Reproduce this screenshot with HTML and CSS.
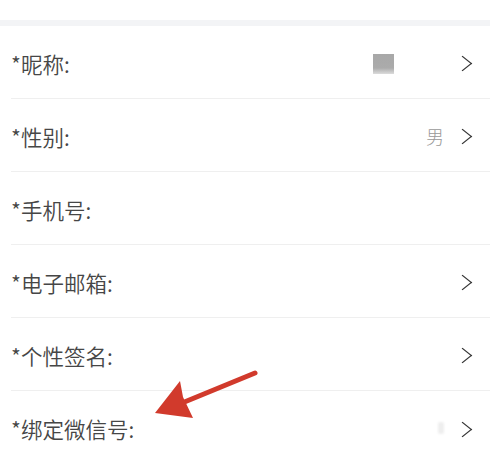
FILE: index.html
```html
<!DOCTYPE html>
<html lang="zh">
<head>
    <meta charset="UTF-8">
    <title>个人资料</title>
    <link rel="stylesheet" href="styles.css">
</head>
<body>
<div class="page">
    <div class="top-space"></div>
    <div class="gap-band"></div>
    <ul class="form-list">
        <li class="row">
            <span class="label">*昵称:</span>
            <span class="value"><span class="avatar-blur"></span></span>
            <span class="chevron"></span>
        </li>
        <li class="row">
            <span class="label">*性别:</span>
            <span class="value text">男</span>
            <span class="chevron"></span>
        </li>
        <li class="row">
            <span class="label">*手机号:</span>
        </li>
        <li class="row">
            <span class="label">*电子邮箱:</span>
            <span class="chevron"></span>
        </li>
        <li class="row">
            <span class="label">*个性签名:</span>
            <span class="chevron"></span>
        </li>
        <li class="row last">
            <span class="label">*绑定微信号:</span>
            <span class="value"><span class="faint"></span></span>
            <span class="chevron"></span>
        </li>
    </ul>
    <!-- annotation arrow over the list -->
    <svg class="arrow" width="130" height="60" viewBox="0 0 130 60">
        <line x1="103" y1="7" x2="30" y2="37" stroke="#d13a2c" stroke-width="5" stroke-linecap="round"/>
        <polygon points="3,47 28,15 31,31 41,52" fill="#d13a2c"/>
    </svg>
</div>
</body>
</html>
```

FILE: styles.css
```css
* { box-sizing: border-box; }
body {
    margin: 0;
    font-family: "Noto Sans CJK SC", "Noto Sans", sans-serif;
    background: #fff;
    color: #444;
}
.page {
    position: relative;
    width: 490px;
    height: 459px;
    overflow: hidden;
}
.top-space {
    height: 20px;
    background: #fff;
}
.gap-band {
    height: 6px;
    background: #f3f4f6;
}
.form-list {
    list-style: none;
    margin: 0;
    padding: 0 0 0 11px;
}
.row {
    display: flex;
    align-items: center;
    height: 73px;
    padding-right: 22px;
    border-bottom: 1px solid #efefef;
}
.row.last {
    border-bottom: none;
}
.label {
    flex: 1;
    font-size: 21.5px;
    font-weight: 350;
    line-height: 1;
    color: #464646;
    padding-top: 3px;
}
.value {
    display: flex;
    align-items: center;
    margin-right: 13px;
}
.value.text {
    font-size: 18px;
    font-weight: 300;
    color: #999;
    margin-right: 13px;
    padding-top: 2px;
}
.avatar-blur {
    width: 21px;
    height: 20px;
    margin-right: 50px;
    margin-top: 4px;
    background: linear-gradient(#a8a8a8 0%, #ababab 70%, #dcdcdc 100%);
}
.faint {
    width: 6px;
    height: 12px;
    background: #eee;
    border-radius: 2px;
    filter: blur(1px);
}
.chevron {
    width: 11px;
    height: 11px;
    margin-top: 3px;
    border-top: 1.6px solid #333;
    border-right: 1.6px solid #333;
    transform: scaleX(1.25) rotate(45deg);
}
.arrow {
    position: absolute;
    left: 152px;
    top: 366px;
}
```
